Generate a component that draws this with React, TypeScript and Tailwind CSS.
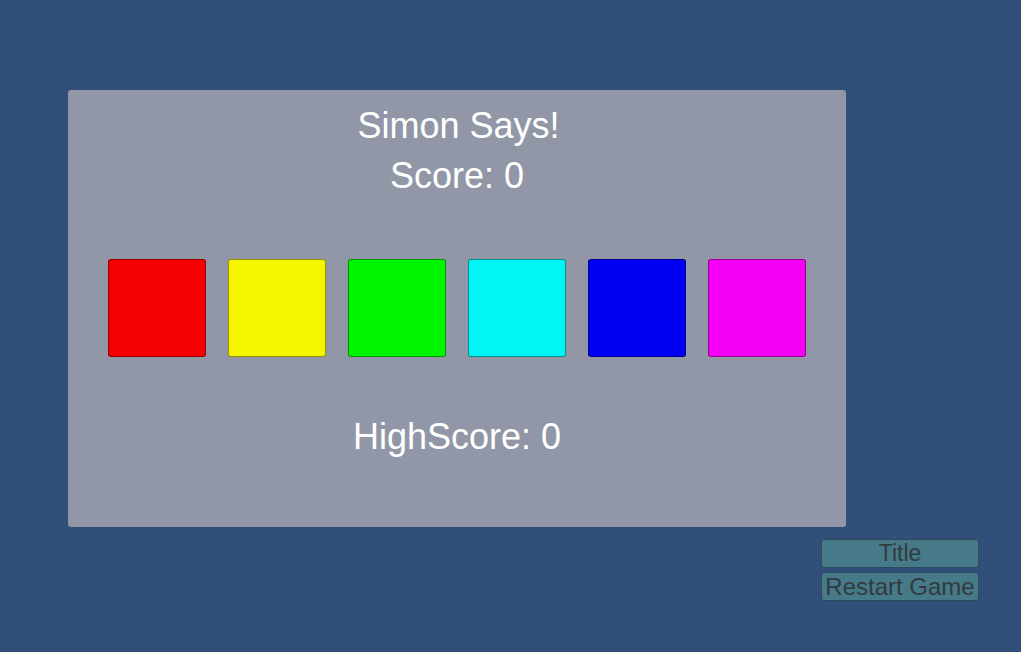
import React from 'react'

const colors = [
  'bg-[#f50000]',
  'bg-[#f5f500]',
  'bg-[#00f500]',
  'bg-[#00f5f5]',
  'bg-[#0000f5]',
  'bg-[#f500f5]'
]

export default function App() {
  return (
    <div
      className="w-[1021px] h-[652px] bg-[#314f79] overflow-hidden"
      style={{ fontFamily: '"Liberation Sans", Arial, sans-serif' }}
    >
      <div className="pt-[90px] pl-[68px] w-[979px] flex flex-col">
        {/* game panel */}
        <div className="w-[778px] h-[437px] bg-[#9197a6] rounded-[3px] flex flex-col items-center pt-[18px] text-white">
          <div className="text-[36px] leading-[36px] pl-[3px]">Simon Says!</div>
          <div className="text-[36px] leading-[36px] mt-[14px]">Score: 0</div>
          <div className="flex gap-[22px] mt-[65px]">
            {colors.map((c) => (
              <div
                key={c}
                className={`${c} w-[98px] h-[98px] rounded-[3px] border border-black/40`}
              />
            ))}
          </div>
          <div className="text-[36px] leading-[36px] mt-[62px]">HighScore: 0</div>
        </div>

        {/* buttons */}
        <div className="self-end flex flex-col gap-[4px] mt-[12px]">
          <button className="w-[158px] h-[29px] bg-[#467a88] border border-[#2b4a5e] rounded-[3px] text-[#323a40] text-[23px] leading-none flex items-center justify-center">
            Title
          </button>
          <button className="w-[158px] h-[29px] bg-[#467a88] border border-[#2b4a5e] rounded-[3px] text-[#323a40] text-[24px] leading-none flex items-center justify-center">
            Restart Game
          </button>
        </div>
      </div>
    </div>
  )
}
